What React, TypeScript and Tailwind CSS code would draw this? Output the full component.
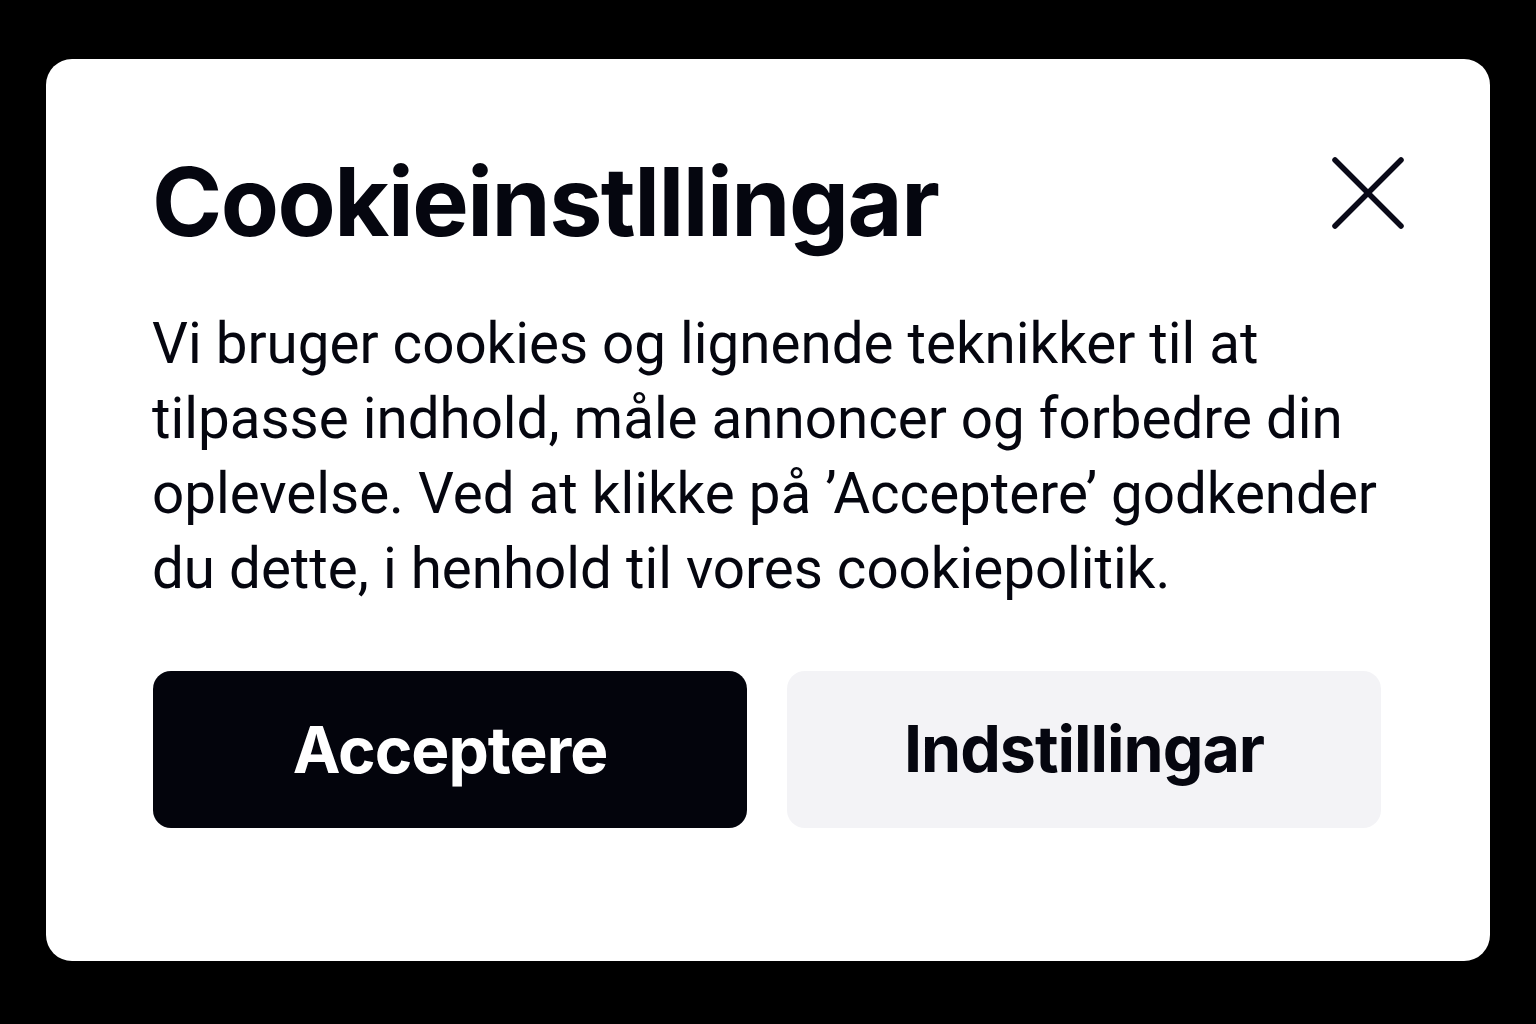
import React from 'react';

const App: React.FC = () => {
    return (
        <div className="w-[1536px] h-[1024px] bg-black pt-[59px] pl-[46px]" style={{ fontFamily: 'Inter, "Noto Sans", sans-serif' }}>
            {/* Dialog */}
            <div className="w-[1444px] h-[902px] bg-white rounded-[26px] pl-[106px] pr-[109px] pt-[95px]">
                {/* Header */}
                <div className="flex items-start justify-between">
                    <h1 className="text-[95px] leading-none font-bold tracking-[-1.5px] text-[#05060f]">
                        Cookieinstlllingar
                    </h1>
                    <button className="w-[72px] h-[72px] -mr-[23px] mt-[3px] text-[#0a0a18]" aria-label="Luk">
                        <svg viewBox="0 0 72 72" className="w-[72px] h-[72px]" fill="none" stroke="currentColor" strokeWidth="5.5" strokeLinecap="round">
                            <path d="M3 3 L69 69" />
                            <path d="M69 3 L3 69" />
                        </svg>
                    </button>
                </div>

                {/* Body text */}
                <p className="mt-[58px] -mr-[30px] text-[56.5px] leading-[75px] text-[#05060f]" style={{ fontFamily: 'Roboto, "Noto Sans", sans-serif' }}>
                    Vi bruger cookies og lignende teknikker til at tilpasse indhold, måle annoncer og forbedre din oplevelse. Ved at klikke på ’Acceptere’ godkender du dette, i henhold til vores cookiepolitik.
                </p>

                {/* Actions */}
                <div className="mt-[64px] grid grid-cols-2 gap-[40px] pl-[1px]">
                    <button className="h-[157px] rounded-[18px] bg-[#03040c] text-white text-[64px] font-bold tracking-[-1px]">
                        Acceptere
                    </button>
                    <button className="h-[157px] rounded-[18px] bg-[#f3f3f6] text-[#05060f] text-[64.5px] font-bold tracking-[-1px]">
                        Indstillingar
                    </button>
                </div>
            </div>
        </div>
    );
};

export default App;
